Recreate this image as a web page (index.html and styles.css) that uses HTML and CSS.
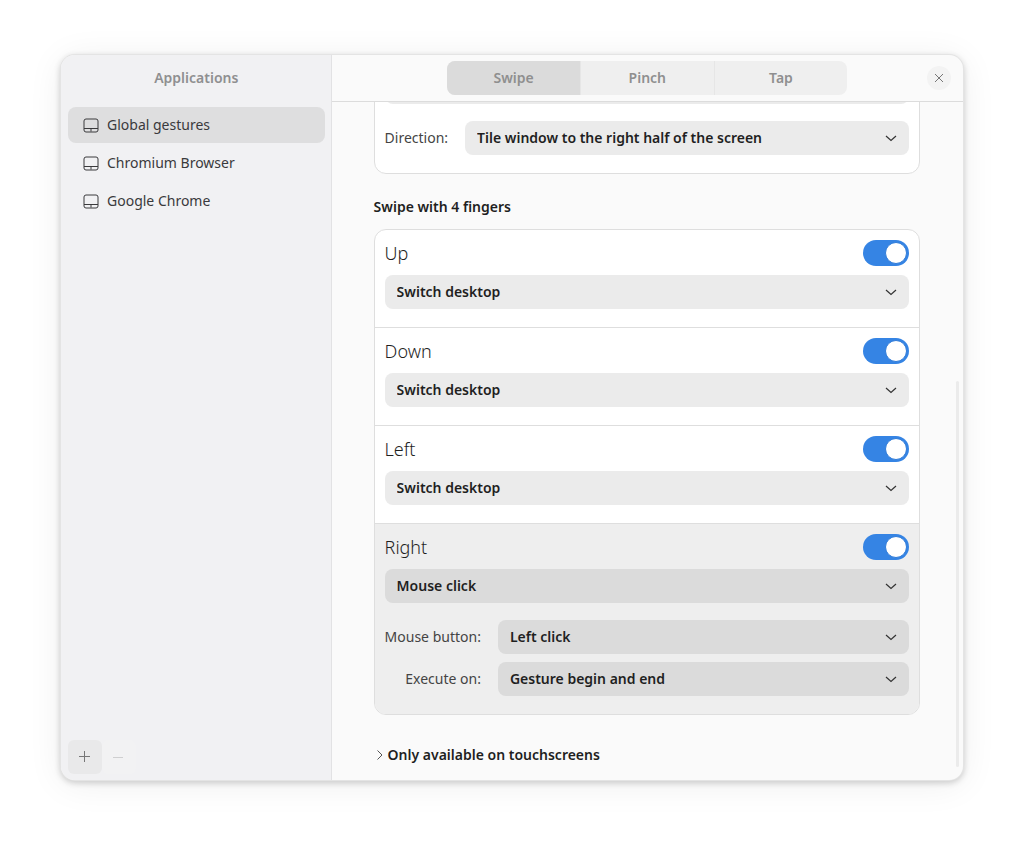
FILE: index.html
```html
<!DOCTYPE html>
<html lang="en">
<head>
    <meta charset="UTF-8">
    <meta name="viewport" content="width=device-width, initial-scale=1.0">
    <title>Gestures</title>
    <link rel="stylesheet" href="styles.css">
</head>
<body>
    <div class="window">
        <aside class="sidebar">
            <h1 class="sidebar-title">Applications</h1>
            <nav class="app-list">
                <a class="app active" href="#global">
                    <svg class="app-icon" viewBox="0 0 16 16"><rect x="1" y="2" width="14" height="13" rx="2"/><path d="M1 11.5h14M8 11.5v3"/></svg>
                    Global gestures
                </a>
                <a class="app" href="#chromium">
                    <svg class="app-icon" viewBox="0 0 16 16"><rect x="1" y="2" width="14" height="13" rx="2"/><path d="M1 11.5h14M8 11.5v3"/></svg>
                    Chromium Browser
                </a>
                <a class="app" href="#chrome">
                    <svg class="app-icon" viewBox="0 0 16 16"><rect x="1" y="2" width="14" height="13" rx="2"/><path d="M1 11.5h14M8 11.5v3"/></svg>
                    Google Chrome
                </a>
            </nav>
            <div class="sidebar-actions">
                <button class="square-btn" type="button" aria-label="Add">
                    <svg viewBox="0 0 16 16"><path d="M2 7.5h11M7.5 2v11"/></svg>
                </button>
                <button class="square-btn" type="button" aria-label="Remove" disabled>
                    <svg viewBox="0 0 16 16"><path d="M2 8.5h10"/></svg>
                </button>
            </div>
        </aside>

        <main class="main">
            <header class="header">
                <div class="tabs">
                    <button class="tab active" type="button">Swipe</button>
                    <button class="tab" type="button">Pinch</button>
                    <button class="tab" type="button">Tap</button>
                </div>
                <button class="close" type="button" aria-label="Close">
                    <svg viewBox="0 0 16 16"><path d="M4 4l8 8M12 4l-8 8"/></svg>
                </button>
            </header>

            <div class="content">
                <section class="card">
                    <div class="gesture">
                        <select class="select" aria-label="Action"></select>
                        <div class="options">
                            <label for="direction">Direction:</label>
                            <select class="select" id="direction"><option>Tile window to the right half of the screen</option></select>
                        </div>
                    </div>
                </section>

                <h2 class="group-title">Swipe with 4 fingers</h2>

                <section class="card">
                    <div class="gesture">
                        <div class="gesture-head">
                            <label for="up">Up</label>
                            <input class="switch" type="checkbox" id="up" checked>
                        </div>
                        <select class="select" aria-label="Up action"><option>Switch desktop</option></select>
                    </div>
                    <div class="gesture">
                        <div class="gesture-head">
                            <label for="down">Down</label>
                            <input class="switch" type="checkbox" id="down" checked>
                        </div>
                        <select class="select" aria-label="Down action"><option>Switch desktop</option></select>
                    </div>
                    <div class="gesture">
                        <div class="gesture-head">
                            <label for="left">Left</label>
                            <input class="switch" type="checkbox" id="left" checked>
                        </div>
                        <select class="select" aria-label="Left action"><option>Switch desktop</option></select>
                    </div>
                    <div class="gesture selected">
                        <div class="gesture-head">
                            <label for="right">Right</label>
                            <input class="switch" type="checkbox" id="right" checked>
                        </div>
                        <select class="select" aria-label="Right action"><option>Mouse click</option></select>
                        <div class="options">
                            <label for="button">Mouse button:</label>
                            <select class="select" id="button"><option>Left click</option></select>
                            <label for="execute">Execute on:</label>
                            <select class="select" id="execute"><option>Gesture begin and end</option></select>
                        </div>
                    </div>
                </section>

                <details class="expander">
                    <summary>
                        <svg viewBox="0 0 8 12"><path d="M1.5 1.5L6 6l-4.5 4.5"/></svg>
                        Only available on touchscreens
                    </summary>
                </details>

                <div class="scrollbar"></div>
            </div>
        </main>
    </div>
</body>
</html>
```

FILE: styles.css
```css
*, *::before { box-sizing: border-box; }

body {
    margin: 0;
    height: 100vh;
    padding: 55px 61px 67px;
    background: #fff;
    color: #1f1f1f;
    font: 14px/20px "Noto Sans", "Open Sans", sans-serif;
}

button, select { font: inherit; color: inherit; border: none; }

svg {
    fill: none;
    stroke: currentColor;
}

.window {
    display: flex;
    height: 100%;
    overflow: hidden;
    border-radius: 14px;
    background: #fafafa;
    box-shadow: 0 0 0 1px #e4e4e4, 0 2px 6px 1px rgba(0, 0, 0, 0.18), 0 4px 36px rgba(0, 0, 0, 0.07);
}

/* sidebar */
.sidebar {
    display: flex;
    flex-direction: column;
    width: 30%;
    padding: 6px 6px 6px 7px;
    background: #f1f1f3;
    border-right: 1px solid #e2e2e4;
}
.sidebar-title {
    margin: 0 0 12px;
    font-size: 14px;
    font-weight: 600;
    line-height: 34px;
    text-align: center;
    color: #8f8f90;
}
.app-list {
    display: flex;
    flex-direction: column;
    gap: 2px;
}
.app {
    display: flex;
    align-items: center;
    gap: 8px;
    height: 36px;
    padding: 0 15px;
    border-radius: 8px;
    color: #3a3a3c;
    text-decoration: none;
}
.app.active { background: #dededf; }
.app-icon { width: 16px; height: 16px; }

.sidebar-actions {
    display: flex;
    margin-top: auto;
}
.square-btn {
    display: flex;
    align-items: center;
    justify-content: center;
    width: 34px;
    height: 34px;
    padding: 0;
    border-radius: 6px;
    background: #e9e9ea;
    color: #777;
}
.square-btn svg { width: 16px; height: 16px; }
.square-btn:disabled {
    background: #f2f2f3;
    color: #cfcfd0;
}

/* header */
.main {
    display: flex;
    flex: 1;
    flex-direction: column;
    min-width: 0;
}
.header {
    display: grid;
    grid-template-columns: 1fr 400px 1fr;
    align-items: center;
    height: 47px;
    padding: 0 12px;
    border-bottom: 1px solid #dcdcdc;
}
.tabs {
    display: flex;
    grid-column: 2;
    height: 34px;
    overflow: hidden;
    border-radius: 8px;
    background: #efefef;
}
.tab {
    flex: 1;
    background: none;
    color: #8f8f8f;
    font-weight: 600;
}
.tab + .tab { border-left: 1px solid #e6e6e6; }
.tab.active { background: #dbdbdb; }
.close {
    display: flex;
    align-items: center;
    justify-content: center;
    justify-self: end;
    width: 24px;
    height: 24px;
    padding: 0;
    border-radius: 50%;
    background: #f3f3f3;
    color: #777;
}
.close svg { width: 16px; height: 16px; }

/* gesture list, kept at the end of its scroll range */
.content {
    position: relative;
    display: flex;
    flex: 1;
    flex-direction: column;
    justify-content: flex-end;
    min-height: 0;
    overflow: hidden;
    padding: 0 43px 15px 42px;
}
.card {
    flex: none;
    overflow: hidden;
    border: 1px solid #dedede;
    border-radius: 12px;
    background: #fff;
}
.group-title {
    margin: 0;
    padding: 23px 0 12px;
    font-size: 14px;
    font-weight: 600;
    line-height: 20px;
}
.gesture { padding: 10px 10px 18px; }
.gesture + .gesture { border-top: 1px solid #dedede; }
.gesture.selected { background: #eee; }
.gesture-head {
    display: flex;
    align-items: center;
    justify-content: space-between;
    height: 26px;
    margin-bottom: 9px;
    font-size: 18px;
    font-weight: 300;
}
.switch {
    appearance: none;
    width: 46px;
    height: 26px;
    margin: 0;
    padding: 2px;
    border-radius: 13px;
    background: #3584e4;
}
.switch::before {
    content: "";
    display: block;
    width: 22px;
    height: 22px;
    border: 1px solid #2f7bd8;
    border-radius: 50%;
    background: #fff;
}
.switch:checked::before { margin-left: auto; }

.select {
    appearance: none;
    display: block;
    width: 100%;
    height: 34px;
    padding: 0 36px 0 12px;
    border-radius: 8px;
    background: #ebebeb url("data:image/svg+xml,%3Csvg xmlns='http://www.w3.org/2000/svg' width='12' height='8' fill='none' stroke='%23333' stroke-width='1.2'%3E%3Cpath d='M1 2l5 4.5L11 2'/%3E%3C/svg%3E") no-repeat right 12px center;
    font-weight: 600;
}
.selected .select { background-color: #dbdbdb; }

.options {
    display: grid;
    grid-template-columns: auto 1fr;
    align-items: center;
    gap: 8px 17px;
    margin-top: 17px;
    color: #444;
}
.options label { text-align: right; }
.options .select { color: #1f1f1f; }

.expander { margin-top: 30px; flex: none; }
.expander summary {
    display: flex;
    align-items: center;
    gap: 4px;
    padding-left: 2px;
    list-style: none;
    font-weight: 600;
}
.expander svg { width: 8px; height: 12px; color: #555; }

.scrollbar {
    position: absolute;
    right: 4px;
    bottom: 13px;
    width: 3px;
    height: 57%;
    border-radius: 2px;
    background: #ebebeb;
}
```
